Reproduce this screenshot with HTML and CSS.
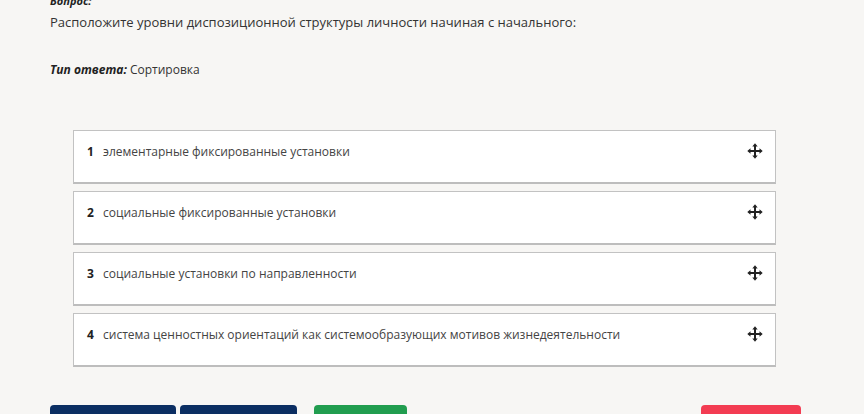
FILE: index.html
```html
<!DOCTYPE html>
<html lang="ru">
<head>
<meta charset="utf-8">
<link rel="stylesheet" href="styles.css">
</head>
<body>
<div class="page">
  <div class="label">Вопрос:</div>
  <div class="question">Расположите уровни диспозиционной структуры личности начиная с начального:</div>
  <div class="type"><span class="type-label">Тип ответа:</span> Сортировка</div>
  <div class="list">
    <div class="item"><span class="num">1</span><span class="text">элементарные фиксированные установки</span><svg class="move" viewBox="0 0 16 16"><path d="M8 2.5V13.5M2.5 8H13.5" stroke="#222" stroke-width="2"/><path d="M8 0.3L5.3 3.5H10.7Z M8 15.7L5.3 12.5H10.7Z M0.3 8L3.5 5.3V10.7Z M15.7 8L12.5 5.3V10.7Z" fill="#222"/></svg></div>
    <div class="item"><span class="num">2</span><span class="text">социальные фиксированные установки</span><svg class="move" viewBox="0 0 16 16"><path d="M8 2.5V13.5M2.5 8H13.5" stroke="#222" stroke-width="2"/><path d="M8 0.3L5.3 3.5H10.7Z M8 15.7L5.3 12.5H10.7Z M0.3 8L3.5 5.3V10.7Z M15.7 8L12.5 5.3V10.7Z" fill="#222"/></svg></div>
    <div class="item"><span class="num">3</span><span class="text">социальные установки по направленности</span><svg class="move" viewBox="0 0 16 16"><path d="M8 2.5V13.5M2.5 8H13.5" stroke="#222" stroke-width="2"/><path d="M8 0.3L5.3 3.5H10.7Z M8 15.7L5.3 12.5H10.7Z M0.3 8L3.5 5.3V10.7Z M15.7 8L12.5 5.3V10.7Z" fill="#222"/></svg></div>
    <div class="item"><span class="num">4</span><span class="text">система ценностных ориентаций как системообразующих мотивов жизнедеятельности</span><svg class="move" viewBox="0 0 16 16"><path d="M8 2.5V13.5M2.5 8H13.5" stroke="#222" stroke-width="2"/><path d="M8 0.3L5.3 3.5H10.7Z M8 15.7L5.3 12.5H10.7Z M0.3 8L3.5 5.3V10.7Z M15.7 8L12.5 5.3V10.7Z" fill="#222"/></svg></div>
  </div>
  <div class="buttons">
    <div class="btn btn-blue btn-w1">Назад</div>
    <div class="btn btn-blue btn-w2">Вперёд</div>
    <div class="btn btn-green btn-w3">Ответ</div>
    <div class="spacer"></div>
    <div class="btn btn-red btn-w4">Выход</div>
  </div>
</div>
</body>
</html>
```
FILE: styles.css
```css
html, body {
  margin: 0;
  padding: 0;
  background: #f7f6f4;
  overflow: hidden;
}
body {
  font-family: "Open Sans", "Noto Sans", sans-serif;
  color: #333;
  width: 864px;
  height: 414px;
}
.page {
  padding: 0 63px 0 50px;
}
.label {
  font-size: 11px;
  font-weight: 700;
  font-style: italic;
  line-height: 14px;
  margin-top: -6px;
  color: #222;
}
.question {
  font-size: 13px;
  line-height: 18px;
  margin-top: 5px;
  color: #333;
}
.type {
  font-size: 12px;
  line-height: 18px;
  margin-top: 30px;
  color: #333;
}
.type-label {
  font-weight: 700;
  font-style: italic;
  color: #222;
}
.list {
  margin: 51px 0 0 23px;
  width: 703px;
  display: flex;
  flex-direction: column;
  gap: 7px;
}
.item {
  box-sizing: border-box;
  height: 54px;
  background: #fff;
  border: 1px solid #c2c2c2;
  border-bottom: 2px solid #bdbdbd;
  display: flex;
  align-items: flex-start;
  padding: 12px 12px 0 13px;
  font-size: 12px;
  line-height: 18px;
  color: #444;
}
.num {
  font-weight: 700;
  color: #222;
  width: 16px;
  flex: none;
}
.text {
  flex: 1;
}
.move {
  width: 16px;
  height: 16px;
  margin-top: 0;
  flex: none;
}
.buttons {
  display: flex;
  margin-top: 38px;
  width: 751px;
  gap: 4px;
}
.btn {
  height: 36px;
  border-radius: 4px;
  color: #fff;
  font-size: 13px;
  line-height: 36px;
  text-align: center;
  box-sizing: border-box;
  flex: none;
}
.btn-blue { background: #0b2e62; }
.btn-green { background: #219d4f; margin-left: 13px; }
.btn-red { background: #f33c52; }
.btn-w1 { width: 126px; }
.btn-w2 { width: 117px; }
.btn-w3 { width: 93px; }
.btn-w4 { width: 100px; }
.spacer { flex: 1; }
```
